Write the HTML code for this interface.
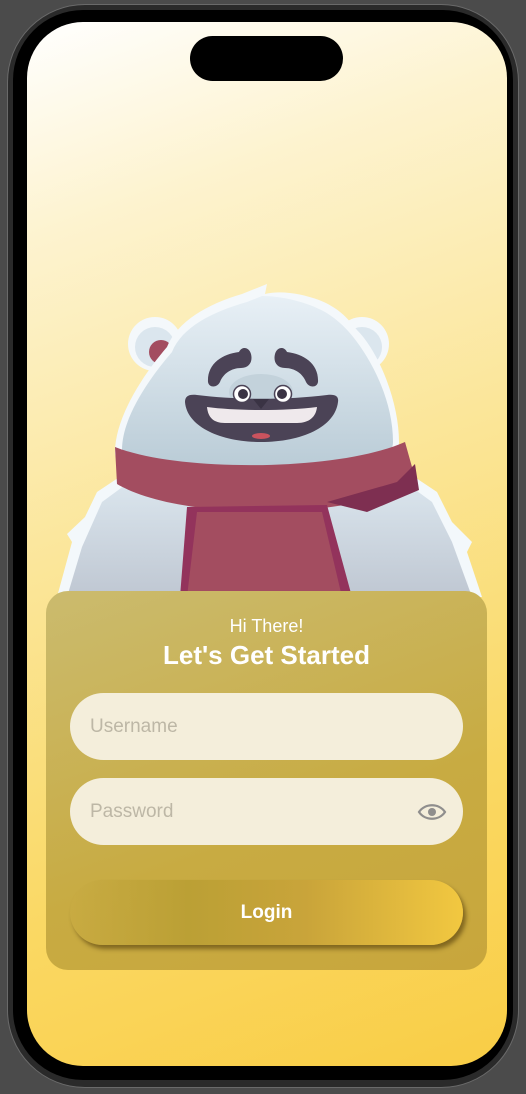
<!DOCTYPE html>
<html><head><meta charset="utf-8"><style>
*{margin:0;padding:0;box-sizing:border-box}
body{width:526px;height:1094px;background:#4b4b4b;position:relative;overflow:hidden;font-family:"Liberation Sans",sans-serif}
.phone{position:absolute;left:7px;top:4px;width:512px;height:1084px;border-radius:78px;background:#2a2a2a;border:1px solid #6a6a6a}
.bezel{position:absolute;left:13px;top:10px;width:500px;height:1070px;border-radius:70px;background:#000}
.screen{position:absolute;left:27px;top:22px;width:480px;height:1044px;border-radius:56px;overflow:hidden;background:linear-gradient(160deg,#ffffff 0%,#fdf3cf 18%,#fbe69a 45%,#fad863 75%,#f9cd45 100%)}
.island{position:absolute;left:163px;top:14px;width:153px;height:45px;border-radius:23px;background:#000}
.card{position:absolute;left:19px;top:569px;width:441px;height:379px;border-radius:22px;background:linear-gradient(160deg,#cbbb6e,#c8ab42 60%,#c8a63c)}
.t1{position:absolute;top:25px;width:100%;text-align:center;color:#fff;font-size:18px}
.t2{position:absolute;top:49px;width:100%;text-align:center;color:#fff;font-size:26px;font-weight:bold}
.field{position:absolute;left:24px;width:393px;height:67px;border-radius:34px;background:#f4eedb;color:#bdb7a6;font-size:19px;padding-left:20px;line-height:67px}
.btn{position:absolute;left:24px;top:289px;width:393px;height:65px;border-radius:33px;background:linear-gradient(90deg,rgba(200,170,60,0) 0%,#bba035 30%,#c9a43a 60%,#f2c840 100%);box-shadow:3px 4px 4px rgba(60,40,0,.5);color:#fff;font-size:19px;font-weight:bold;text-align:center;line-height:65px}
</style></head><body>
<div class="phone"></div><div class="bezel"></div>
<div class="screen">
<div class="island"></div>
<svg width="480" height="600" style="position:absolute;left:0;top:0">
<defs>
<linearGradient id="fur" x1="0" y1="0" x2="0" y2="1"><stop offset="0" stop-color="#e8f0f6"/><stop offset="1" stop-color="#b9cbd6"/></linearGradient>
<linearGradient id="body" x1="0" y1="0" x2="0" y2="1"><stop offset="0" stop-color="#dbe6ee"/><stop offset="1" stop-color="#bfc7d2"/></linearGradient>
</defs>
<path d="M30 575 L45 520 L40 512 L58 495 L70 470 L100 450 L380 450 L410 470 L425 500 L445 520 L440 530 L455 575 Z" fill="#f3f8fb"/>
<path d="M40 575 L55 525 L75 480 L105 458 L375 458 L405 480 L425 520 L445 575 Z" fill="url(#body)"/>
<circle cx="128" cy="322" r="27" fill="#f4f8fb"/><circle cx="128" cy="325" r="20" fill="#dbe6ee"/><circle cx="134" cy="330" r="12" fill="#a34d60"/>
<circle cx="335" cy="322" r="27" fill="#f4f8fb"/><circle cx="335" cy="325" r="20" fill="#dbe6ee"/><circle cx="330" cy="330" r="12" fill="#a34d60"/>
<path d="M88 430 C88 400 110 360 140 325 C150 300 180 282 215 272 L240 262 L238 272 C255 268 275 272 292 278 C310 285 320 295 330 308 C352 330 372 380 372 420 C372 445 340 455 230 455 C120 455 88 450 88 430 Z" fill="#f4f8fb"/>
<path d="M95 428 C95 400 115 365 145 330 C155 305 185 290 220 280 L235 274 C255 274 280 280 298 290 C315 300 328 315 340 335 C355 360 366 390 366 420 C366 440 335 448 230 448 C125 448 95 445 95 428 Z" fill="url(#fur)"/>
<path d="M88 425 C150 450 310 450 378 420 L385 445 C390 460 375 470 340 478 C300 488 260 490 230 488 C180 490 120 480 90 462 Z" fill="#a34d60"/>
<path d="M300 480 L370 460 L388 442 L392 468 L340 490 Z" fill="#7e2f51"/>
<path d="M160 485 L300 483 L325 575 L153 575 Z" fill="#93335c"/>
<path d="M170 490 L295 490 L315 575 L160 575 Z" fill="#a34d60"/>
<ellipse cx="234" cy="370" rx="32" ry="18" fill="#c3d2db"/>
<path d="M158 380 C158 374 162 372 170 373 C210 378 260 378 300 373 C308 372 312 374 311 380 C308 405 275 420 234 420 C194 420 160 405 158 380 Z" fill="#4b4356"/>
<path d="M180 385 C210 389 258 389 290 385 C289 395 282 401 270 401 L198 401 C186 401 181 395 180 385 Z" fill="#efe9ec"/>
<ellipse cx="234" cy="414" rx="9" ry="3" fill="#c9535e"/>
<path d="M181 360 C180 342 195 332 212 330 C215 324 222 325 224 332 C226 340 222 346 214 346 C204 346 196 352 193 360 C190 366 182 366 181 360 Z" fill="#4b4356"/>
<path d="M291 360 C292 342 277 332 260 330 C257 324 250 325 248 332 C246 340 250 346 258 346 C268 346 276 352 279 360 C282 366 290 366 291 360 Z" fill="#4b4356"/>
<circle cx="215" cy="372" r="8.5" fill="#fff" stroke="#4b4356" stroke-width="1.5"/><circle cx="216" cy="372" r="5" fill="#3a3344"/>
<circle cx="256" cy="372" r="8.5" fill="#fff" stroke="#4b4356" stroke-width="1.5"/><circle cx="255" cy="372" r="5" fill="#3a3344"/>
<path d="M226 377 L242 377 L234 387 Z" fill="#3a3344"/>
</svg>
<div class="card">
<div class="t1">Hi There!</div>
<div class="t2">Let's Get Started</div>
<div class="field" style="top:102px">Username</div>
<div class="field" style="top:187px">Password
<svg width="30" height="20" viewBox="0 0 30 20" style="position:absolute;right:16px;top:24px"><path d="M2 10 C8 1 22 1 28 10 C22 19 8 19 2 10 Z" fill="none" stroke="#8f8e8d" stroke-width="2.2"/><circle cx="15" cy="10" r="4" fill="#8f8e8d"/></svg></div>
<div class="btn">Login</div>
</div>
</div>
</body></html>
